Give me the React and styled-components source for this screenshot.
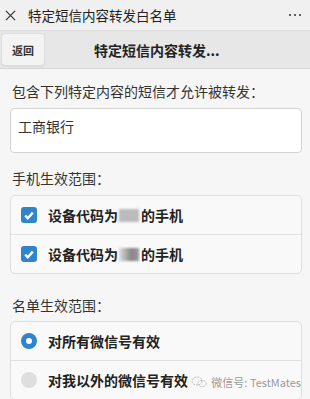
import React from 'react';
import styled, { createGlobalStyle } from 'styled-components';

const GlobalStyle = createGlobalStyle`
  html, body {
    margin: 0;
    padding: 0;
    background: #f6f6f6;
    font-family: "Noto Sans CJK SC", "Noto Sans", "Liberation Sans", sans-serif;
  }
`;

const phones = ['设备代码为', '设备代码为'];
const scopes = [
  { label: '对所有微信号有效', checked: true },
  { label: '对我以外的微信号有效', checked: false },
];

const App = () => (
  <>
    <GlobalStyle />
    <Page>
      <TopBar>
        <CloseIcon viewBox="0 0 12 12">
          <path d="M1 1 L11 11 M11 1 L1 11" stroke="#333" strokeWidth="1.3" fill="none" />
        </CloseIcon>
        <TopTitle>特定短信内容转发白名单</TopTitle>
        <More>
          <Dot />
          <Dot />
          <Dot />
        </More>
      </TopBar>

      <Header>
        <BackButton>返回</BackButton>
        <HeaderTitle>特定短信内容转发...</HeaderTitle>
      </Header>

      <Content>
        <Label>包含下列特定内容的短信才允许被转发：</Label>
        <TextBox>工商银行</TextBox>

        <Label>手机生效范围：</Label>
        <Card>
          {phones.map((text, i) => (
            <Row key={i}>
              <CheckBox>
                <svg width="10" height="9" viewBox="0 0 10 9">
                  <path d="M1.2 4.6 L3.8 7.2 L8.8 1.6" stroke="#fff" strokeWidth="2.4" fill="none" />
                </svg>
              </CheckBox>
              <RowText>
                {text}
                <Redacted $light={i === 1} />
                的手机
              </RowText>
            </Row>
          ))}
        </Card>

        <Label $spaced>名单生效范围：</Label>
        <Card>
          {scopes.map((s) => (
            <Row key={s.label}>
              <Radio $checked={s.checked} />
              <RowText>{s.label}</RowText>
            </Row>
          ))}
        </Card>
      </Content>

      <Watermark>
        <svg width="16" height="12" viewBox="0 0 16 12">
          <ellipse cx="6" cy="5" rx="5" ry="4" stroke="#aaa" strokeWidth="0.8" fill="none" strokeDasharray="2 1" />
          <ellipse cx="11" cy="7.5" rx="4" ry="3.2" stroke="#aaa" strokeWidth="0.8" fill="none" strokeDasharray="2 1" />
        </svg>
        微信号: TestMates
      </Watermark>
    </Page>
  </>
);

const Page = styled.div`
  position: relative;
  width: 310px;
  height: 399px;
  overflow: hidden;
  background: #f6f6f6;
`;

const TopBar = styled.div`
  height: 30px;
  display: flex;
  align-items: center;
  padding: 0 8px 0 5px;
  background: #f0f0f0;
  border-bottom: 1px solid #dcdcdc;
`;

const CloseIcon = styled.svg`
  width: 11px;
  height: 11px;
  margin-right: 12px;
`;

const TopTitle = styled.div`
  flex: 1;
  font-size: 13.5px;
  color: #222;
`;

const More = styled.div`
  display: flex;
  gap: 3px;
  margin-right: 1px;
`;

const Dot = styled.span`
  width: 2px;
  height: 2px;
  border-radius: 50%;
  background: #333;
`;

const Header = styled.div`
  height: 37px;
  display: flex;
  align-items: center;
  padding: 0 1px;
  background: #e7e7e7;
  border-bottom: 1px solid #d6d6d6;
`;

const BackButton = styled.div`
  width: 44px;
  height: 33px;
  box-sizing: border-box;
  display: flex;
  align-items: center;
  justify-content: center;
  font-size: 11px;
  font-weight: bold;
  color: #333;
  background: #f3f3f3;
  border: 1px solid #dedede;
  border-radius: 4px;
  box-shadow: 0 1px 1px rgba(0, 0, 0, 0.06);
`;

const HeaderTitle = styled.div`
  margin-left: 49px;
  font-size: 14px;
  font-weight: bold;
  color: #222;
`;

const Content = styled.div`
  padding: 12px 8px 0 10px;
`;

const Label = styled.div`
  font-size: 14px;
  color: #333;
  margin: ${(p) => (p.$spaced ? '21px' : '0')} 0 ${(p) => (p.$spaced ? '6px' : '7px')} 2px;
  line-height: 20px;
`;

const TextBox = styled.div`
  height: 45px;
  box-sizing: border-box;
  padding: 7px 7px;
  font-size: 14px;
  color: #333;
  background: #fff;
  border: 1px solid #d2d2d2;
  border-radius: 4px;
  margin-bottom: 15px;
`;

const Card = styled.div`
  background: #f9f9f9;
  border: 1px solid #dedede;
  border-radius: 5px;
`;

const Row = styled.div`
  height: 38px;
  display: flex;
  align-items: center;
  padding-left: 10px;
  & + & {
    border-top: 1px solid #e0e0e0;
  }
`;

const CheckBox = styled.div`
  width: 16px;
  height: 16px;
  border-radius: 3px;
  background: #2f84cc;
  display: flex;
  align-items: center;
  justify-content: center;
  margin-right: 11px;
`;

const Radio = styled.div`
  width: 16px;
  height: 16px;
  box-sizing: border-box;
  border-radius: 50%;
  margin-right: 11px;
  background: ${(p) => (p.$checked ? '#fff' : '#dedede')};
  border: ${(p) => (p.$checked ? '5px solid #2f84cc' : 'none')};
`;

const RowText = styled.div`
  display: flex;
  align-items: center;
  font-size: 14px;
  font-weight: bold;
  color: #222;
`;

const Redacted = styled.span`
  display: inline-block;
  width: 20px;
  height: 13px;
  margin: 0 2px 0 1px;
  background: ${(p) => (p.$light ? 'linear-gradient(90deg, #ddd 0%, #888 60%, #999 100%)' : '#bbb')};
  filter: blur(1px);
`;

const Watermark = styled.div`
  position: absolute;
  right: 9px;
  bottom: 9px;
  display: flex;
  align-items: center;
  gap: 4px;
  font-size: 11px;
  color: #999;
  text-shadow: 0 0 2px #fff;
`;

export default App;
